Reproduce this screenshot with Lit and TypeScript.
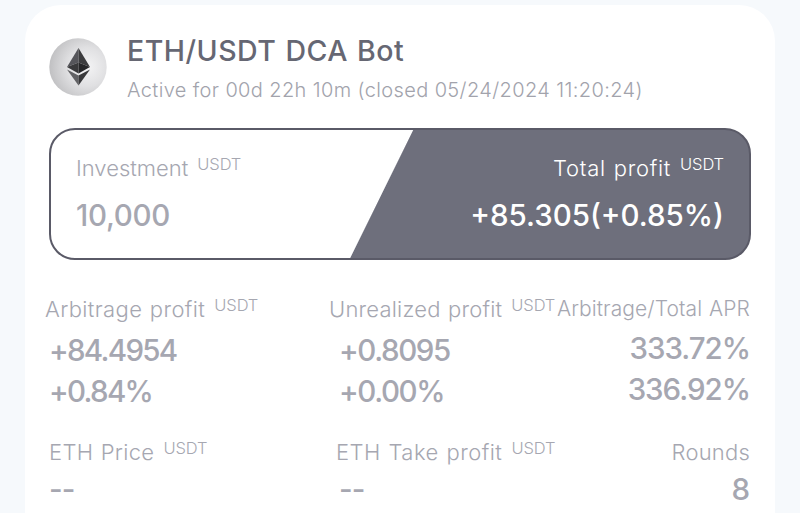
import { LitElement, css, html, svg, nothing } from 'lit';
import { customElement, property } from 'lit/decorators.js';

interface Stat {
    name: string;
    label: string;
    unit?: string;
    values: string[];
}

const STATS: Stat[] = [
    { name: 'arbitrage', label: 'Arbitrage profit', unit: 'USDT', values: ['+84.4954', '+0.84%'] },
    { name: 'unrealized', label: 'Unrealized profit', unit: 'USDT', values: ['+0.8095', '+0.00%'] },
    { name: 'apr', label: 'Arbitrage/Total APR', values: ['333.72%', '336.92%'] },
    { name: 'price', label: 'ETH Price', unit: 'USDT', values: ['--'] },
    { name: 'take', label: 'ETH Take profit', unit: 'USDT', values: ['--'] },
    { name: 'rounds', label: 'Rounds', values: ['8'] },
];

@customElement('coin-icon')
export class CoinIcon extends LitElement {
    static styles = css`
        :host{
            display: block;
            width: 58px;
            height: 58px;
        }

        .coin{
            display: block;
            width: 100%;
            height: 100%;
        }
    `;

    render() {
        return html`
            <svg class="coin" viewBox="0 0 58 58">
                <defs>
                    <radialGradient id="disc" cx="0.66" cy="0.5" r="0.68">
                        <stop offset="0" stop-color="#f4f4f5" />
                        <stop offset="0.5" stop-color="#e0e0e2" />
                        <stop offset="1" stop-color="#bebec0" />
                    </radialGradient>
                </defs>
                <circle cx="29" cy="29" r="28.7" fill="url(#disc)" />
                ${svg`
                    <path d="M29.5 10 L18 29 L29.5 24.4 Z" fill="#55555a" />
                    <path d="M29.5 10 L41 29 L29.5 24.4 Z" fill="#3c3c3e" />
                    <path d="M18 29 L29.5 24.4 V35.4 Z" fill="#39393b" />
                    <path d="M41 29 L29.5 24.4 V35.4 Z" fill="#262628" />
                    <path d="M18 31.6 L29.5 37.6 V47.6 Z" fill="#626265" />
                    <path d="M41 31.6 L29.5 37.6 V47.6 Z" fill="#38383a" />
                `}
            </svg>
        `;
    }
}

@customElement('bot-stat')
export class BotStat extends LitElement {
    @property() label = '';
    @property() unit?: string;
    @property({ attribute: false }) values: string[] = [];

    static styles = css`
        :host{
            display: flex;
            flex-direction: column;
            align-items: var(--stat-align, flex-start);
            white-space: nowrap;
            color: var(--stat-color, #a6a7b1);
        }

        .label{
            display: flex;
            gap: 9px;
            height: 30px;

            font-size: var(--label-size, 22px);
            font-weight: 300;
            line-height: 30px;
            letter-spacing: var(--label-spacing, 0.2px);
            word-spacing: 1px;
            margin-left: var(--label-left, 0);
        }

        .unit{
            font-size: 16.5px;
            line-height: 22px;
            letter-spacing: -0.1px;
        }

        .values{
            display: flex;
            flex-direction: column;
            align-items: inherit;
            padding-top: var(--value-top, 6px);
        }

        .value{
            font-size: 29.5px;
            font-weight: 450;
            line-height: 41px;
            letter-spacing: var(--value-spacing, -1.4px);
        }
    `;

    render() {
        return html`
            <div class="label">
                <span>${this.label}</span>
                ${this.unit ? html`<span class="unit">${this.unit}</span>` : nothing}
            </div>
            <div class="values">
                ${this.values.map((value) => html`<span class="value">${value}</span>`)}
            </div>
        `;
    }
}

@customElement('app-root')
export class AppRoot extends LitElement {
    static styles = css`
        :host{
            display: block;
            box-sizing: border-box;
            height: 513px;
            padding: 5px 25px 0;
            overflow: hidden;

            background: #f6f9fc;
            font-family: Inter, "Liberation Sans", sans-serif;
        }

        .card{
            box-sizing: border-box;
            height: 560px;
            padding: 33px 24px 0;

            background: white;
            border-radius: 36px;
        }

        .header{
            display: flex;
            gap: 20px;
            height: 90px;
        }

        .title{
            margin: -4px 0 0;
            color: #666773;
            font-size: 28.5px;
            font-weight: 450;
            line-height: 34px;
            letter-spacing: 0.5px;
            word-spacing: 1px;
            white-space: nowrap;
        }

        .status{
            margin: 8px 0 0;
            color: #a2a3ac;
            font-size: 20px;
            font-weight: 300;
            line-height: 28px;
            letter-spacing: 0.38px;
            white-space: nowrap;
        }

        .summary{
            display: flex;
            justify-content: space-between;
            box-sizing: border-box;
            height: 132px;
            padding: 23px 25px 0 25px;

            border: 2px solid #5a5a67;
            border-radius: 26px;
            background: linear-gradient(116.2deg, white 0 324.5px, #6e6f7c 325.5px);
        }

        .investment,
        .total{
            --value-top: 12px;
        }

        .investment{
            --label-spacing: 0;
            --value-spacing: -0.3px;
        }

        .total{
            --stat-align: flex-end;
            --stat-color: white;
            --label-spacing: 0.7px;
            --value-spacing: 0;
        }

        .stats{
            display: grid;
            grid-template-columns: 290px 217px 194px;
            row-gap: 25px;
            padding-top: 34px;
        }

        .arbitrage{
            --label-left: -4px;
            --label-spacing: 0.38px;
            --value-spacing: -1.7px;
        }

        .unrealized{
            --label-left: -10px;
            --label-spacing: 0.2px;
        }

        .price,
        .take{
            --value-top: 2px;
            --value-spacing: -1px;
        }

        .price{
            --label-spacing: 0.3px;
        }

        .take{
            --label-left: -3px;
            --label-spacing: 0.48px;
        }

        .apr,
        .rounds{
            --stat-align: flex-end;
            --value-top: 4px;
        }

        .apr{
            --label-size: 21px;
            --label-spacing: 0.08px;
            --value-spacing: -1px;
        }

        .rounds{
            --value-top: 2px;
            --value-spacing: 0;
        }
    `;

    render() {
        return html`
            <main class="card">
                <header class="header">
                    <coin-icon></coin-icon>
                    <div>
                        <h1 class="title">ETH/USDT DCA Bot</h1>
                        <p class="status">Active for 00d 22h 10m (closed 05/24/2024 11:20:24)</p>
                    </div>
                </header>

                <section class="summary">
                    <bot-stat class="investment" label="Investment" unit="USDT" .values=${['10,000']}></bot-stat>
                    <bot-stat class="total" label="Total profit" unit="USDT" .values=${['+85.305(+0.85%)']}></bot-stat>
                </section>

                <section class="stats">
                    ${STATS.map((stat) => html`
                        <bot-stat class="${stat.name}" label="${stat.label}" .unit=${stat.unit} .values=${stat.values}></bot-stat>
                    `)}
                </section>
            </main>
        `;
    }
}
